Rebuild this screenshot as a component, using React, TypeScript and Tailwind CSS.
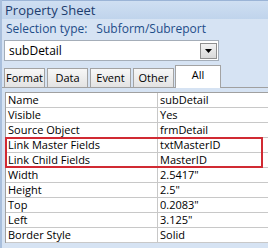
import React from "react";

const rows: [string, string][] = [
  ["Name", "subDetail"],
  ["Visible", "Yes"],
  ["Source Object", "frmDetail"],
  ["Link Master Fields", "txtMasterID"],
  ["Link Child Fields", "MasterID"],
  ["Width", "2.5417\""],
  ["Height", "2.5\""],
  ["Top", "0.2083\""],
  ["Left", "3.125\""],
  ["Border Style", "Solid"],
];

const tabs = ["Format", "Data", "Event"];

export default function App() {
  return (
    <div
      className="relative w-[268px] h-[248px] overflow-hidden bg-[#d6e3f3] border-l-[2px] border-[#a9bfdc]"
      style={{ fontFamily: '"Open Sans", "Noto Sans", sans-serif' }}
    >
      <div className="h-[19px] border-t border-[#9bb4d6] bg-gradient-to-b from-[#cfdff2] to-[#c0d4ec] pl-[3px] text-[13px] leading-[18px] text-[#1d3c6d]">
        Property Sheet
      </div>
      <div className="h-[19px] pl-[4px] text-[12px] leading-[20px] text-[#1e4d89] flex gap-[9px]">
        <span>Selection type:</span>
        <span>Subform/Subreport</span>
      </div>
      <div className="ml-[2px] mt-[2px] w-[215px] h-[21px] bg-white border border-[#a4adb8] flex items-center justify-between pl-[4px] pr-[1px]">
        <span className="text-[12px] text-black leading-none">subDetail</span>
        <div className="w-[17px] h-[16px] bg-gradient-to-b from-[#f2f2f2] to-[#d9d9d9] border border-[#8f8f8f] flex items-center justify-center">
          <svg width="7" height="4" viewBox="0 0 7 4">
            <polygon points="0,0 7,0 3.5,4" fill="#000" />
          </svg>
        </div>
      </div>
      <div className="mt-[3px] h-[24px] flex items-end border-b border-[#a0a0a0]">
        <div className="w-[2px]" />
        {tabs.map((t) => (
          <div
            key={t}
            className="h-[19px] mr-[2px] w-[41px] border border-b-0 border-[#a3a3a3] bg-gradient-to-b from-[#f7f7f7] to-[#e3e3e3] text-[11px] leading-[18px] text-black flex justify-center"
          >
            {t}
          </div>
        ))}
        <div className="h-[19px] mr-[1px] w-[41px] border border-b-0 border-[#a3a3a3] bg-gradient-to-b from-[#f7f7f7] to-[#e3e3e3] text-[11px] leading-[18px] text-black flex justify-center">
          Other
        </div>
        <div className="h-[23px] w-[46px] -mb-px border border-b-0 border-[#a3a3a3] bg-white text-[11px] leading-[18px] text-black flex justify-center">
          All
        </div>
      </div>
      <div className="mt-[4px] ml-[3px] bg-white border-l border-t border-[#a0a0a0]">
        {rows.map(([k, v]) => (
          <div key={k} className="flex h-[15px] border-b border-[#c8c8c8] text-[11px] leading-[14px] text-black">
            <div className="w-[152px] pl-[2px] border-r border-[#c8c8c8] whitespace-nowrap">{k}</div>
            <div className="pl-[2px] whitespace-nowrap">{v}</div>
          </div>
        ))}
      </div>
      <div className="absolute left-[3px] top-[137px] w-[258px] h-[31px] border-2 border-[#d12a33]" />
    </div>
  );
}
